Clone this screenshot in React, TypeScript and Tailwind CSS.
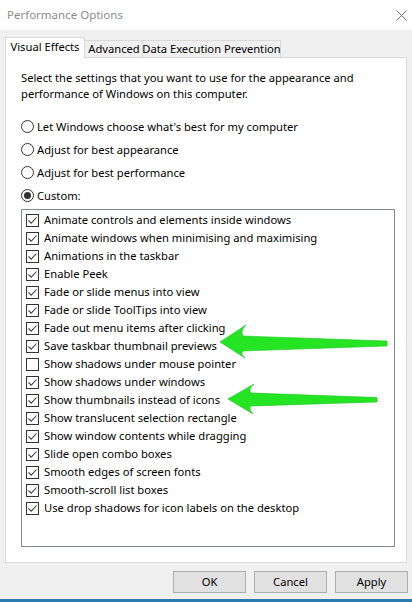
import React from 'react';

const effects: { label: string; checked: boolean }[] = [
    { label: 'Animate controls and elements inside windows', checked: true },
    { label: 'Animate windows when minimising and maximising', checked: true },
    { label: 'Animations in the taskbar', checked: true },
    { label: 'Enable Peek', checked: true },
    { label: 'Fade or slide menus into view', checked: true },
    { label: 'Fade or slide ToolTips into view', checked: true },
    { label: 'Fade out menu items after clicking', checked: true },
    { label: 'Save taskbar thumbnail previews', checked: true },
    { label: 'Show shadows under mouse pointer', checked: false },
    { label: 'Show shadows under windows', checked: true },
    { label: 'Show thumbnails instead of icons', checked: true },
    { label: 'Show translucent selection rectangle', checked: true },
    { label: 'Show window contents while dragging', checked: true },
    { label: 'Slide open combo boxes', checked: true },
    { label: 'Smooth edges of screen fonts', checked: true },
    { label: 'Smooth-scroll list boxes', checked: true },
    { label: 'Use drop shadows for icon labels on the desktop', checked: true },
];

const radios = [
    { label: "Let Windows choose what's best for my computer", selected: false },
    { label: 'Adjust for best appearance', selected: false },
    { label: 'Adjust for best performance', selected: false },
    { label: 'Custom:', selected: true },
];

const Checkbox: React.FC<{ checked: boolean }> = ({ checked }) => (
    <span className="flex h-[13px] w-[13px] shrink-0 items-center justify-center border border-[#333333] bg-white">
        {checked && (
            <svg width="11" height="11" viewBox="0 0 11 11">
                <path d="M1.5 5.5 L4.2 8.2 L9.5 2.5" fill="none" stroke="#444444" strokeWidth="1.1" />
            </svg>
        )}
    </span>
);

const Radio: React.FC<{ selected: boolean }> = ({ selected }) => (
    <span className="flex h-[13px] w-[13px] shrink-0 items-center justify-center rounded-full border border-[#333333] bg-white">
        {selected && <span className="h-[7px] w-[7px] rounded-full bg-[#333333]" />}
    </span>
);

const Button: React.FC<{ label: string }> = ({ label }) => (
    <button className="flex h-[22px] w-[73px] items-center justify-center border border-[#adadad] bg-[#e1e1e1] text-[11.2px] text-black">
        {label}
    </button>
);

export default function App() {
    return (
        <div className="relative flex h-[602px] w-[412px] flex-col overflow-hidden bg-[#f0f0f0] font-['Noto_Sans','Liberation_Sans',sans-serif] text-[11.2px] leading-none whitespace-nowrap text-black">
            {/* title bar */}
            <div className="flex h-[30px] shrink-0 items-center justify-between bg-white pl-[7px] pr-[5px]">
                <span className="text-[11.5px] text-[#8c8c8c]">Performance Options</span>
                <svg width="11" height="11" viewBox="0 0 11 11">
                    <path d="M0.5 0.5 L10.5 10.5 M10.5 0.5 L0.5 10.5" stroke="#777777" strokeWidth="1" />
                </svg>
            </div>

            <div className="flex flex-1 flex-col px-[5px] pt-[7px]">
                {/* tabs */}
                <div className="flex h-[20px] items-end">
                    <div className="relative z-10 -mb-px flex h-[21px] w-[80px] items-center justify-center border border-b-0 border-[#d9d9d9] bg-white pb-[2px]">
                        Visual Effects
                    </div>
                    <div className="flex h-[17px] w-[58px] items-center justify-center border-t border-r border-[#d9d9d9] pl-[1px]">
                        Advanced
                    </div>
                    <div className="flex h-[17px] w-[138px] items-center justify-center border-t border-r border-[#d9d9d9]">
                        Data Execution Prevention
                    </div>
                </div>

                {/* panel */}
                <div className="flex h-[506px] flex-col border border-[#d9d9d9] bg-white pl-[15px] pt-[12px]">
                    <p className="leading-[16px]">
                        Select the settings that you want to use for the appearance and
                        <br />
                        performance of Windows on this computer.
                    </p>

                    <div className="mt-[13px] flex flex-col">
                        {radios.map((r) => (
                            <div key={r.label} className="flex h-[23px] items-center gap-[3px]">
                                <Radio selected={r.selected} />
                                <span>{r.label}</span>
                            </div>
                        ))}
                    </div>

                    <div className="mt-[2px] h-[338px] w-[374px] border border-[#828790] pl-[4px] pt-[1px]">
                        {effects.map((e) => (
                            <div key={e.label} className="flex h-[18px] items-center gap-[5px]">
                                <Checkbox checked={e.checked} />
                                <span>{e.label}</span>
                            </div>
                        ))}
                    </div>
                </div>

                {/* buttons */}
                <div className="mt-[8px] flex justify-end gap-[8px]">
                    <Button label="OK" />
                    <Button label="Cancel" />
                    <div className="-mr-px">
                        <Button label="Apply" />
                    </div>
                </div>
            </div>

            <div className="h-[3px] shrink-0 bg-[#2c7cb0]" />

            {/* annotation arrows */}
            <svg className="pointer-events-none absolute left-0 top-0" width="412" height="602" viewBox="0 0 412 602">
                <path
                    d="M220 342 L246 325 Q240 331 243 336 L387 341 L387 346 L243 351 Q240 354 245 358 Z"
                    fill="#24e424"
                    stroke="#1dc41d"
                    strokeWidth="0.6"
                    strokeLinejoin="round"
                />
                <path
                    d="M228 399 L254 384 Q248 389 251 393 L377 397.5 L377 402 L251 406 Q248 409 253 414 Z"
                    fill="#24e424"
                    stroke="#1dc41d"
                    strokeWidth="0.6"
                    strokeLinejoin="round"
                />
            </svg>
        </div>
    );
}
